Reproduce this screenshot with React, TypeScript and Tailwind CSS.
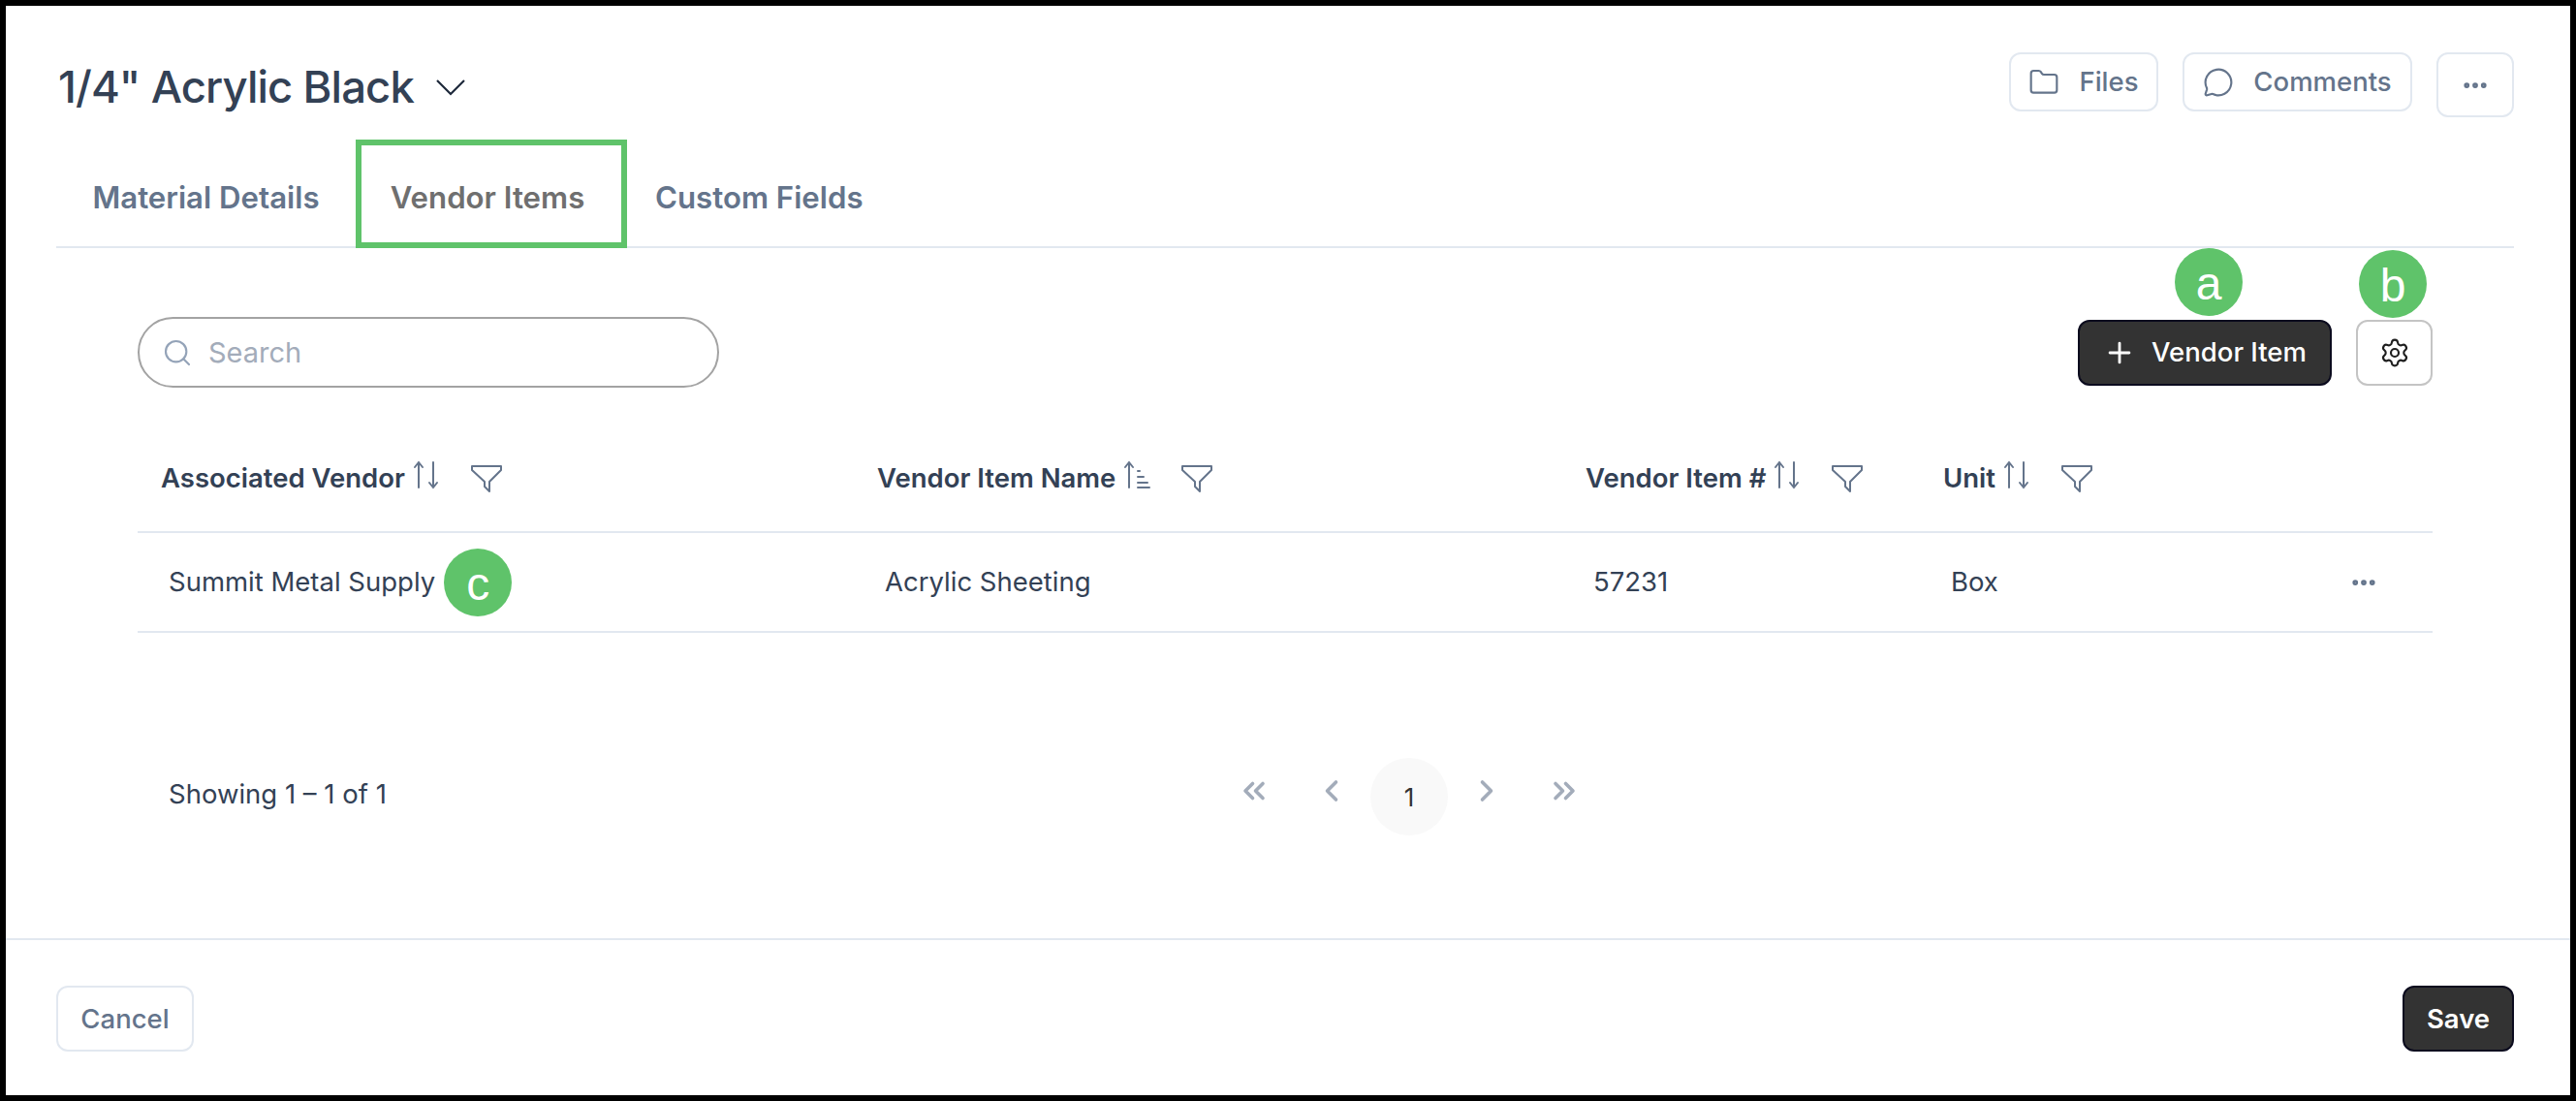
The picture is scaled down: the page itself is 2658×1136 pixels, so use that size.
import React from 'react';
import {
  ChevronLeft,
  ChevronRight,
  ChevronsLeft,
  ChevronsRight,
  Ellipsis,
  Folder,
  MessageCircle,
  Plus,
  Search,
  Settings,
} from 'lucide-react';

function FilterIcon() {
  return (
    <svg width="32" height="30" viewBox="0 0 32 30" fill="none" stroke="#64748b" strokeWidth="2" strokeLinejoin="round">
      <path d="M1 2H31V6L19 18V28L14 23V18L1 6Z" />
    </svg>
  );
}

function SortIcon() {
  return (
    <svg width="28" height="30" viewBox="0 0 28 30" fill="none" stroke="#64748b" strokeWidth="2" strokeLinecap="round">
      <path d="M6 28V2M2 7L6 2L10 7" />
      <path d="M21 2V28M17 23L21 28L25 23" />
    </svg>
  );
}

function SortUpIcon() {
  return (
    <svg width="28" height="30" viewBox="0 0 28 30" fill="none" stroke="#64748b" strokeWidth="2" strokeLinecap="round">
      <path d="M6 28V2M2 7L6 2L10 7" />
      <path d="M15 11H17M15 17H21M15 23H25M15 28H27" />
    </svg>
  );
}

function Marker({ letter }: { letter: string }) {
  return (
    <span className="flex h-[70px] w-[70px] items-center justify-center rounded-full bg-[#5fc36a] pt-[4px] font-['Liberation_Sans',sans-serif] text-[48px] leading-none text-white">
      {letter}
    </span>
  );
}

const columns = [
  { title: 'Associated Vendor', sort: <SortIcon />, value: 'Summit Metal Supply' },
  { title: 'Vendor Item Name', sort: <SortUpIcon />, value: 'Acrylic Sheeting' },
  { title: 'Vendor Item #', sort: <SortIcon />, value: '57231' },
  { title: 'Unit', sort: <SortIcon />, value: 'Box' },
];

export default function App() {
  return (
    <div className="flex h-[1136px] w-[2658px] flex-col border-[6px] border-black bg-white font-['Inter',sans-serif] text-[27.5px] text-[#334155]">
      {/* header */}
      <div className="flex items-start justify-between pl-[54px] pr-[58px] pt-[48px]">
        <div className="flex h-[72px] items-center gap-[23px]">
          <h1 className="text-[45.5px] font-medium leading-none tracking-[-0.9px]">1/4" Acrylic Black</h1>
          <svg width="30" height="17" viewBox="0 0 30 17" fill="none" stroke="#1e293b" strokeWidth="2.2">
            <path d="M1 1L15 15L29 1" />
          </svg>
        </div>
        <div className="flex items-start gap-[25px] font-medium text-[#64748b]">
          <button className="flex h-[61px] w-[154px] items-center justify-center gap-[20px] rounded-xl border-2 border-[#e2e8f0] pt-[1px]">
            <Folder size={32} strokeWidth={1.6} />
            Files
          </button>
          <button className="flex h-[61px] w-[237px] items-center justify-center gap-[20px] rounded-xl border-2 border-[#e2e8f0] pt-[1px]">
            <MessageCircle size={32} strokeWidth={1.6} />
            Comments
          </button>
          <button className="flex h-[67px] w-[80px] items-center justify-center rounded-xl border-2 border-[#e2e8f0]">
            <Ellipsis size={30} strokeWidth={2.6} />
          </button>
        </div>
      </div>

      {/* tabs */}
      <div className="ml-[52px] mr-[58px] mt-[18px] flex h-[112px] border-b-2 border-[#e2e8f0] text-[31.2px] font-semibold leading-[36px] text-[#64748b]">
        <div className="w-[309px] pt-[42px] text-center">Material Details</div>
        <div className="relative w-[272px] pt-[42px] text-center text-[#6f6f6f]">
          Vendor Items
          <div className="absolute -bottom-[2px] left-0 -right-[8px] top-0 border-[6px] border-[#5fc36a]" />
        </div>
        <div className="pl-[37px] pt-[42px]">Custom Fields</div>
      </div>

      <div className="flex flex-1 flex-col pl-[136px] pr-[142px] pt-[71px]">
        {/* toolbar */}
        <div className="flex h-[73px] items-center justify-between">
          <div className="flex h-[73px] w-[600px] items-center gap-[16px] rounded-full border-2 border-[#a3a3a3] pl-[23px]">
            <Search size={32} strokeWidth={1.6} className="text-[#94a3b8]" />
            <span className="pt-[1px] text-[29px] text-[#a3acba]">Search</span>
          </div>
          <div className="flex items-center gap-[25px]">
            <div className="relative">
              <button className="flex h-[68px] w-[262px] items-center justify-center gap-[16px] rounded-xl border-2 border-[#0b0b1e] bg-[#333333] font-medium text-white">
                <Plus size={34} strokeWidth={2} />
                Vendor Item
              </button>
              <div className="absolute -top-[74px] left-[100px]">
                <Marker letter="a" />
              </div>
            </div>
            <div className="relative">
              <button className="flex h-[68px] w-[79px] items-center justify-center rounded-xl border-2 border-[#c4c4c4] text-[#1f1f1f]">
                <Settings size={32} strokeWidth={1.6} />
              </button>
              <div className="absolute -top-[72px] left-[3px]">
                <Marker letter="b" />
              </div>
            </div>
          </div>
        </div>

        {/* table */}
        <div className="mt-[40px] grid h-[110px] grid-cols-[739px_731px_369px_369px_1fr] items-center border-b-2 border-[#e2e8f0] font-semibold">
          {columns.map((col) => (
            <div key={col.title} className="flex items-center pl-[24px]">
              <span>{col.title}</span>
              <span className="ml-[8px] -translate-y-[4px]">{col.sort}</span>
              <span className="ml-[32px]">
                <FilterIcon />
              </span>
            </div>
          ))}
        </div>
        <div className="grid h-[103px] grid-cols-[739px_731px_369px_369px_1fr] items-center border-b-2 border-[#e2e8f0]">
          {columns.map((col, i) => (
            <div key={col.title} className="flex items-center gap-[9px] pl-[32px]">
              <span>{col.value}</span>
              {i === 0 && <Marker letter="c" />}
            </div>
          ))}
          <div className="flex justify-end pr-[56px] text-[#64748b]">
            <Ellipsis size={30} strokeWidth={2.6} />
          </div>
        </div>

        {/* pagination */}
        <div className="mt-[129px] flex items-center">
          <span className="w-[1112px] pb-[4px] pl-[32px]">Showing 1 – 1 of 1</span>
          <div className="flex text-[#a3acba]">
            <span className="flex h-[80px] w-[80px] items-center justify-center pb-[12px]">
              <ChevronsLeft size={36} strokeWidth={2.4} />
            </span>
            <span className="flex h-[80px] w-[80px] items-center justify-center pb-[12px]">
              <ChevronLeft size={36} strokeWidth={2.4} />
            </span>
            <span className="flex h-[80px] w-[80px] items-center justify-center rounded-full bg-[#f9f9f9] text-[26px] text-[#333333]">
              1
            </span>
            <span className="flex h-[80px] w-[80px] items-center justify-center pb-[12px]">
              <ChevronRight size={36} strokeWidth={2.4} />
            </span>
            <span className="flex h-[80px] w-[80px] items-center justify-center pb-[12px]">
              <ChevronsRight size={36} strokeWidth={2.4} />
            </span>
          </div>
        </div>
      </div>

      {/* footer */}
      <div className="flex h-[162px] items-start justify-between border-t-2 border-[#e2e8f0] pl-[52px] pr-[58px] pt-[47px] font-medium">
        <button className="h-[68px] w-[142px] rounded-xl border-2 border-[#e2e8f0] pt-[2px] text-[#64748b]">Cancel</button>
        <button className="h-[68px] w-[115px] rounded-xl border-2 border-[#0b0b1e] bg-[#333333] pt-[2px] font-semibold text-white">Save</button>
      </div>
    </div>
  );
}
